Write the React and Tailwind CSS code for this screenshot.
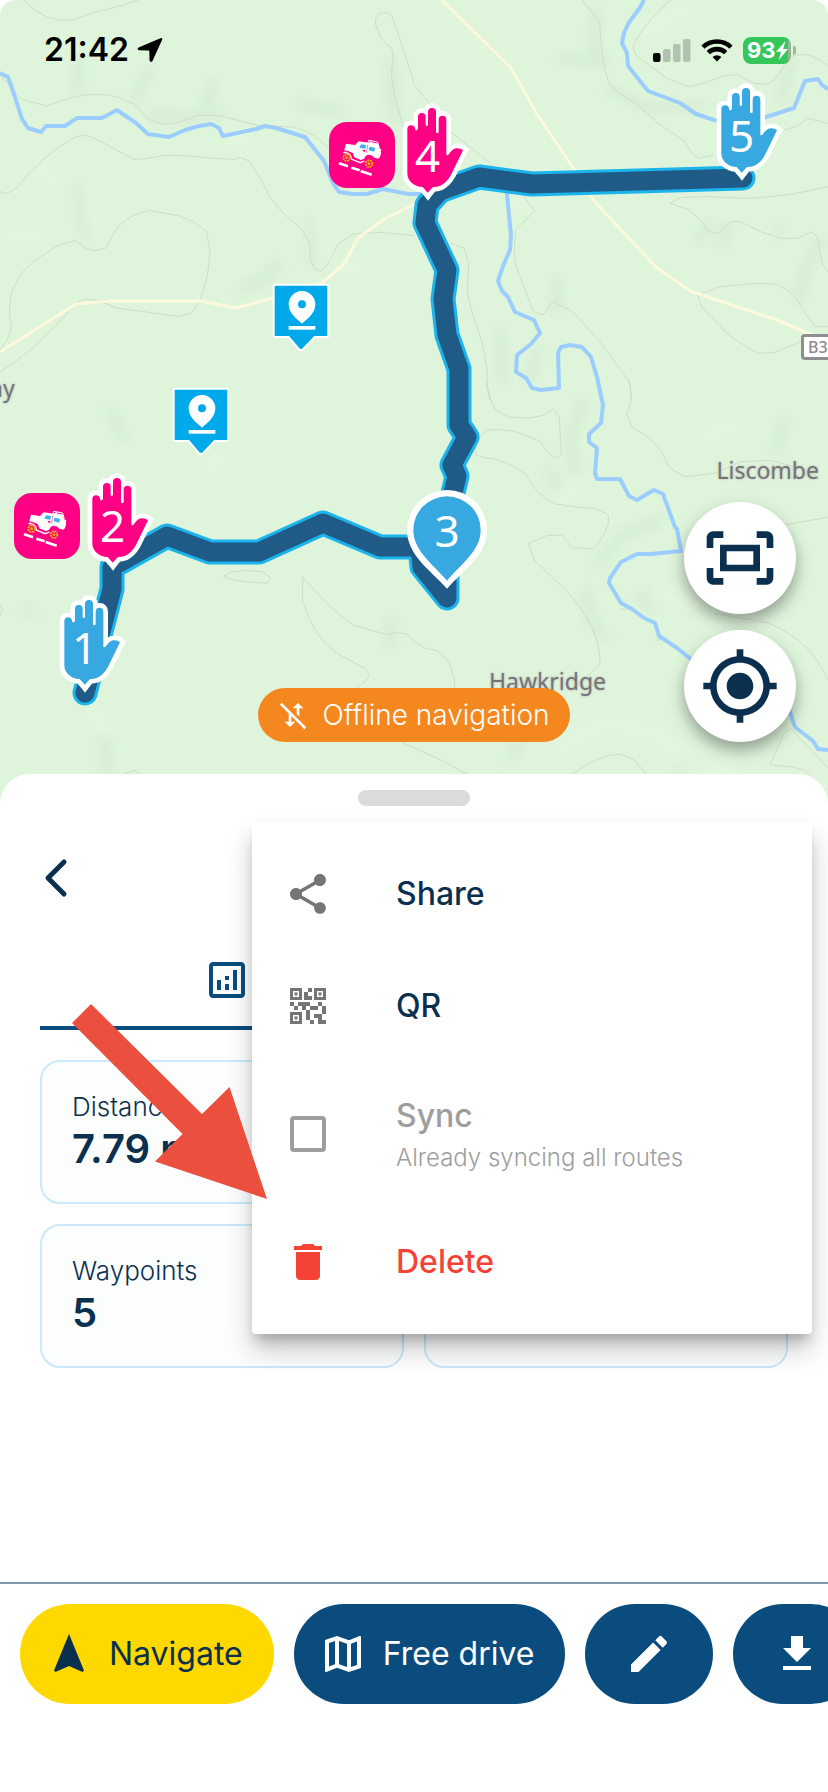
import React from "react";
import {
  MdShare,
  MdQrCode2,
  MdDelete,
  MdEdit,
  MdFileDownload,
  MdOutlineMap,
  MdNavigation,
  MdOutlineAnalytics,
  MdOutlineFitScreen,
  MdGpsFixed,
  MdMobiledataOff,
} from "react-icons/md";

const ROUTE =
  "M85 693L112 589L112 567L167 536L210 552L259 552L323 523L380 547L420 547L422 567L447 598L447 530L453 493L457 476L452 465L467 437L459 425L459 369L447 335L443 299L447 270L425 223L427 205L440 191L479 177L532 184L743 178";

function Terrain() {
  return (
    <svg
      className="absolute inset-0 h-full w-full"
      viewBox="0 0 828 804"
      preserveAspectRatio="xMidYMin slice"
      aria-hidden="true"
    >
      <defs>
        <filter id="soft" x="-50%" y="-50%" width="200%" height="200%">
          <feGaussianBlur stdDeviation="6" />
        </filter>
      </defs>
      <rect width="828" height="804" fill="#def5db" />

      <g filter="url(#soft)" fill="none" strokeLinecap="round" strokeLinejoin="round">
        <g stroke="#a9caa8" strokeOpacity="0.2" strokeWidth="9">
          <path d="M80 60L78 92M150 72L134 98M212 84L206 104" />
          <path d="M82 185L80 222L90 236" />
          <path d="M150 114L190 118L220 112M300 104L340 112" />
          <path d="M240 290L262 280L278 262M312 220L314 262" />
          <path d="M392 60L392 110L400 122" />
          <path d="M596 10L592 50L606 62M560 58L600 62" />
          <path d="M610 90L650 108L700 106" />
          <path d="M708 224L700 240M728 226L722 246M780 224L782 250" />
          <path d="M820 240L806 270L798 300" />
          <path d="M558 280L556 310M500 330L502 380M538 350L530 378" />
          <path d="M584 400L570 440L576 474M548 470L560 488" />
          <path d="M660 520L620 536L598 566" />
          <path d="M586 590L590 620L606 636M640 592L650 610" />
          <path d="M784 420L776 450M790 60L782 100" />
          <path d="M104 738L108 774M510 760L520 740M680 770L690 760" />
          <path d="M110 410L124 438M24 608L36 622M390 620L392 648" />
        </g>
        <g stroke="#edfbe8" strokeOpacity="0.5" strokeWidth="9">
          <path d="M90 180L94 230M10 235L40 237M40 160L50 180" />
          <path d="M322 215L324 256M344 270L360 262M230 142L246 138" />
          <path d="M510 210L540 196M646 30L690 6M786 235L784 262" />
          <path d="M560 500L580 484M700 440L736 424M660 590L690 604" />
          <path d="M560 750L600 724L650 730L690 764M706 776L730 770" />
          <path d="M206 470L222 458M26 620L34 626M92 710L106 730" />
        </g>
      </g>

      <g fill="none" stroke="#d0dcc6" strokeWidth="3">
        <g transform="scale(0.33333)">
          <path d="M70 0Q140 70 210 61Q250 50 270 40Q360 20 415 0" />
          <path d="M0 225L66 298L140 318L225 290Q300 275 355 292L402 312L446 358L492 374Q540 370 590 347L660 347L770 375L885 382Q950 400 990 450" />
          <path d="M0 575L22 580L52 562Q120 470 228 410L254 406Q280 410 330 440L402 478L440 476L490 466L560 467L640 475L700 478L724 473L748 484Q780 530 812 595L850 640L904 686L931 732L931 778L943 806L962 814L985 790L1015 732L1060 702L1140 697L1242 707" />
          <path d="M0 1050L22 1020L35 978Q20 930 38 870L60 824L105 780L178 734L228 722L255 744L288 752L318 744L332 718Q350 670 402 646L446 631L534 647L580 665L620 695L630 756Q625 830 612 860L598 908L572 940L534 949L446 937L350 924L288 900L254 898L230 908L168 976Q90 1060 0 1116" />
          <path d="M1242 250Q1200 110 1176 50Q1150 20 1127 55L1127 75Q1140 120 1175 145L1180 170L1174 222L1184 290L1215 400L1242 460" />
        </g>
        <g transform="translate(414 0) scale(0.33333)">
          <path d="M0 255L48 312M105 392Q180 450 230 490L325 585L362 632L305 690Q295 780 312 815L358 934L387 945L416 905L474 934Q560 1020 620 1110L648 1150L652 1200" />
          <path d="M505 0L557 65Q560 180 586 253L630 290L668 312L735 372L810 422L834 460L855 475L900 465M1110 390L1150 378L1180 355L1242 370" />
          <path d="M770 0Q700 60 660 130Q650 160 690 185L760 236L827 260L870 250L926 228L968 224L1020 250L1060 252Q1090 240 1120 180Q1170 140 1242 198" />
          <path d="M1242 560Q1120 590 1000 595L880 590L800 592L768 610L825 630L860 660L884 695L914 700L945 668L975 663L1040 695L1100 715L1150 715L1195 695L1210 712L1225 790L1242 815" />
          <path d="M1242 980L1205 980L1180 950L1150 900L1118 868L1088 853L1030 850L920 860L850 885L866 925L950 1010L1030 1060L1080 1058L1160 1025" />
          <path d="M110 730L150 745L164 790L160 880L175 940L205 1030L220 1110L218 1160L228 1200" />
        </g>
        <g transform="translate(0 380) scale(0.33333)">
          <path d="M670 590L690 577L740 571L785 575L812 593L802 610L740 606L700 600Z" />
          <path d="M908 590L908 665Q940 770 1010 820L1095 865L1108 885L1095 905L1070 923M908 590Q980 680 1060 735L1160 764L1190 757L1220 762L1242 784" />
          <path d="M370 1183L402 1171L422 1183M0 675L8 690L0 708M1205 1087L1242 1103" />
        </g>
        <g transform="translate(414 380) scale(0.33333)">
          <path d="M218 0Q225 60 245 90L285 112L345 114L388 106L418 88L436 112L442 225L430 234Q400 225 380 185Q290 140 220 150L185 185L185 225L210 233Q270 235 332 280Q370 350 425 372L505 383L540 385L583 404L583 434Q560 490 535 507L475 503L445 466L400 466L343 490L360 540L450 625Q560 740 558 850L520 890" />
          <path d="M645 0L653 58L638 105L655 142L705 172L740 210L768 265L812 290L900 280L980 245L1070 241L1180 270L1215 300M1242 412L1115 434M900 700L1060 728Q1190 780 1242 900" />
          <path d="M0 784L35 805L70 812L105 845L122 900L122 925M475 1183Q560 1120 620 1123L660 1140L698 1183M0 1103L80 1140L160 1183" />
          <path d="M1242 1164L1130 1045L1110 1060L1068 1155L1130 1160L1170 1170L1190 1183M620 687L652 687M722 780L740 780" />
        </g>
      </g>

      <g fill="none" stroke="#fdf9dc" strokeWidth="3" strokeLinejoin="round">
        <path d="M0 352L76 304L110 301L200 301L236 308L274 298L322 283L344 264L358 238L386 218L420 202" />
        <path d="M442 0L511 68L537 114L576 172L594 201L656 267L690 291L777 320L828 342" />
      </g>

      <g fill="none" stroke="#9bcdff" strokeWidth="4" strokeLinejoin="round">
        <path d="M0 73L8 77L15 97L22 119L28 128L41 132L46 126L65 126L77 118L102 118L117 110L136 123L148 134L169 137L185 130L199 126L211 124L219 128L223 136L256 129L265 126L276 128L305 137L324 161L333 183L339 192L352 194L367 194L383 189L408 194L424 194" />
        <path d="M644 0L641 6L628 24L624 33L622 43L627 53L628 66L648 91L680 103L696 114L714 120L742 124L766 117L794 108L805 81L818 79L822 85L828 89" />
        <path d="M506 184L511 235L510 250L503 266L498 281L502 291L508 297L515 312L534 320L540 333L531 344L517 355L516 372L526 378L532 388L541 390L559 388L558 353L561 347L570 345L582 347L591 357L597 377L603 405L601 423L589 434L589 442L597 448L595 473L597 479L620 479L629 496L637 500L654 490L663 494L675 527L677 529L681 551L651 554L637 554L621 562L610 578L609 583L621 603L632 609L644 618L655 623L659 636L677 648L692 660L740 680L790 712L795 727L813 741L818 749L828 750" />
      </g>

      <g fill="none" strokeLinejoin="round" strokeLinecap="round">
        <path d={ROUTE} stroke="#1cb4ec" strokeWidth="25" />
        <path d={ROUTE} stroke="#1f5b86" strokeWidth="19" />
      </g>
    </svg>
  );
}

const HAND =
  "M245 89Q245 77 256.500 77Q268 77 269 92Q277 93 277 84L277 51Q277 40 288.500 40Q300 40 300 51L300 76Q303 82 307 76L307 37Q307 25 319 25Q331 25 331 37L331 98Q335 104 339 98L339 60Q339 48 350.500 48Q362 48 362 60L362 165Q366 170 370 163Q380 148 392 146Q405 145 412 152L376 226Q362 250 344 258Q335 262 322 262L306 279L291 262Q270 262 256 248Q245 236 245 220Z";

function HandMarker({ place, fill, children }) {
  return (
    <div className={`absolute h-[98px] w-[68px] ${place}`}>
      <svg className="absolute inset-0 h-full w-full" viewBox="229 10 204 294" aria-hidden="true">
        <path d={HAND} fill="#fff" stroke="#fff" strokeWidth="28" strokeLinejoin="round" />
        <path d="M276 262L307 303L338 262ZM392 132L431 149L405 190Z" fill="#fff" />
        <path d={HAND} fill={fill} />
      </svg>
      <span className="absolute left-0 top-[22px] w-[51px] text-center font-['Noto_Sans',sans-serif] text-[44px] leading-[60px] text-white">
        {children}
      </span>
    </div>
  );
}

function PoiMarker({ place }) {
  return (
    <svg className={`absolute h-[69px] w-[58px] ${place}`} viewBox="0 0 174 207" aria-hidden="true">
      <path
        d="M10 5H164Q169 5 169 10V157Q169 162 164 162H128L94 198Q87 205 80 198L50 162H10Q5 162 5 157V10Q5 5 10 5Z"
        fill="#00aaea"
        stroke="#fff"
        strokeWidth="6"
      />
      <path
        fillRule="evenodd"
        d="M90 24A40 40 0 0 1 130 64C130 90 108 106 90 122C72 106 50 90 50 64A40 40 0 0 1 90 24ZM90 52A12 12 0 1 0 90 76A12 12 0 1 0 90 52Z"
        fill="#fff"
      />
      <rect x="50" y="129" width="80" height="11" fill="#fff" />
    </svg>
  );
}

function JeepBadge({ place }) {
  return (
    <div className={`absolute size-[66px] rounded-[18px] bg-[#ff0084] ${place}`}>
      <svg className="h-full w-full" viewBox="0 0 198 198" aria-hidden="true">
        <path
          d="M51 65L78 69L89 58L148 66L152 76L149 110L136 107Q130 98 118 98Q108 100 105 112L96 115L76 106L72 94Q64 88 54 89L45 88Z"
          fill="#fff"
        />
        <path d="M44 86Q62 86 68 97L72 108L94 116L106 112" fill="none" stroke="#ff0084" strokeWidth="3" />
        <path d="M43 92Q58 90 64 100L68 112L94 122L106 117" fill="none" stroke="#fff" strokeWidth="4" />
        <path d="M96 67L111 69L109 80L91 77ZM121 74L138 77L136 89L119 85Z" fill="#35b5ea" />
        <path d="M101 85L109 84L107 90ZM116 69L113 92" fill="#ff0084" stroke="#ff0084" strokeWidth="1.500" />
        <path d="M117 62L119 55L146 60L148 68M126 56L128 63M120 61L146 66" fill="none" stroke="#fff" strokeWidth="3" />
        <path d="M151 80L157 81L155 91L157 92L152 107L145 105Z" fill="#fff" />
        <circle cx="53" cy="107" r="10" fill="#ff0084" stroke="#f2b900" strokeWidth="5" strokeDasharray="6 2" />
        <circle cx="53" cy="107" r="4" fill="#f2b900" />
        <circle cx="120" cy="125" r="10" fill="#ff0084" stroke="#f2b900" strokeWidth="5" strokeDasharray="6 2" />
        <circle cx="120" cy="125" r="4" fill="#f2b900" />
        <path d="M30 124L57 133M67 137L92 145M95 147L128 158" stroke="#fff" strokeWidth="8" />
      </svg>
    </div>
  );
}

function StatusBar() {
  return (
    <header className="absolute inset-x-0 top-0 flex h-[100px] items-center justify-between pl-11 pr-8">
      <div className="flex items-center gap-2">
        <time className="text-[32px] font-semibold leading-10 text-black">21:42</time>
        <svg className="size-[26px]" viewBox="0 0 26 26" aria-hidden="true">
          <path d="M24 1Q26 1 25 3L15.500 24Q13.500 26 12.500 23.500L12.300 14.300Q12.200 13.500 11.500 13.500L2 13.300Q-.5 12.500 1.500 10.500Z" fill="#000" />
        </svg>
      </div>
      <div className="flex items-center gap-[10px]">
        <svg className="h-6 w-[38px]" viewBox="0 0 38 24" aria-hidden="true">
          <rect x="0" y="15" width="7.500" height="9" rx="2" fill="#000" />
          <rect x="10" y="11" width="7.500" height="13" rx="2" fill="#b0c3ae" />
          <rect x="20" y="6" width="7.500" height="18" rx="2" fill="#b0c3ae" />
          <rect x="30" y="1" width="7.500" height="23" rx="2" fill="#b0c3ae" />
        </svg>
        <svg className="h-6 w-8" viewBox="0 0 32 24" aria-hidden="true">
          <g fill="none" stroke="#000" strokeWidth="4.600">
            <path d="M2 9.200A20 20 0 0 1 30 9.200" />
            <path d="M7.300 14.600A12.500 12.500 0 0 1 24.700 14.600" />
          </g>
          <path d="M11.500 19Q16 15.500 20.500 19L16 23.500Z" fill="#000" />
        </svg>
        <div className="flex items-center gap-0.5">
          <div className="flex h-[27px] w-12 items-center overflow-hidden rounded-[8px] bg-[linear-gradient(to_right,#35c759_94%,#93b593_94%)] pl-1">
            <span className="text-[22px] font-bold leading-6 text-white">93</span>
            <svg className="h-[19px] w-3" viewBox="0 0 12 19" aria-hidden="true">
              <path d="M9.500 0L0 10.800H5L2.800 19L12 8H7.200Z" fill="#fff" />
            </svg>
          </div>
          <span className="h-[9px] w-[3px] rounded-r-full bg-[#a3b5a2]" />
        </div>
      </div>
    </header>
  );
}

function MapLabel({ place, children }) {
  return (
    <span
      className={`absolute font-['Noto_Sans',sans-serif] text-[23px] leading-8 text-[#757575] [text-shadow:0_0_2px_#bdbdbd,0_0_3px_#cfcfcf] ${place}`}
    >
      {children}
    </span>
  );
}

function MapButton({ label, children }) {
  return (
    <button
      type="button"
      aria-label={label}
      className="flex size-28 items-center justify-center rounded-full bg-white text-[#0b304f] shadow-[0_8px_16px_rgba(0,0,0,0.35)]"
    >
      {children}
    </button>
  );
}

function RouteMap() {
  return (
    <section className="relative h-[804px] shrink-0 overflow-hidden rounded-t-2xl">
      <Terrain />
      <MapLabel place="right-[9px] top-[454px]">Liscombe</MapLabel>
      <MapLabel place="left-[489px] top-[665px]">Hawkridge</MapLabel>
      <MapLabel place="-left-[10px] top-[372px]">ay</MapLabel>
      <span className="absolute -right-[25px] top-[334px] flex h-[26px] items-center rounded-[4px] border-[3px] border-[#8e8e92] bg-white px-1 font-['Noto_Sans',sans-serif] text-base font-medium text-[#8a8a8a]">
        B322
      </span>

      <PoiMarker place="left-[272px] top-[283px]" />
      <PoiMarker place="left-[172px] top-[387px]" />
      <JeepBadge place="left-[329px] top-[122px]" />
      <JeepBadge place="left-[14px] top-[493px]" />

      <HandMarker place="left-[716px] top-[83px]" fill="#38a8e0">5</HandMarker>
      <HandMarker place="left-[402px] top-[103px]" fill="#ff0084">4</HandMarker>
      <HandMarker place="left-[87px] top-[473px]" fill="#ff0084">2</HandMarker>
      <HandMarker place="left-[59px] top-[595px]" fill="#38a8e0">1</HandMarker>
      <div className="absolute left-[407px] top-[490px] h-[100px] w-20">
        <svg className="absolute inset-0 h-full w-full" viewBox="0 0 240 300" aria-hidden="true">
          <path d="M120 0A120 120 0 0 1 240 120C240 195 170 240 120 296C70 240 0 195 0 120A120 120 0 0 1 120 0Z" fill="#fff" />
          <path d="M120 19A101 101 0 0 1 221 120C221 182 163 222 120 272C77 222 19 182 19 120A101 101 0 0 1 120 19Z" fill="#38a8e0" />
        </svg>
        <span className="absolute inset-x-0 top-[10px] text-center font-['Noto_Sans',sans-serif] text-[44px] leading-[60px] text-white">
          3
        </span>
      </div>

      <StatusBar />

      <div className="absolute right-8 top-[502px] flex flex-col gap-4">
        <MapButton label="Fit route to screen">
          <MdOutlineFitScreen className="size-20" />
        </MapButton>
        <MapButton label="Centre on my location">
          <MdGpsFixed className="size-20" />
        </MapButton>
      </div>

      <div className="absolute inset-x-0 top-[688px] flex justify-center">
        <div className="flex h-[54px] items-center gap-3 rounded-full bg-[#f5871f] px-5 text-white">
          <MdMobiledataOff className="size-8" />
          <span className="text-[28px] font-light leading-8">Offline navigation</span>
        </div>
      </div>
    </section>
  );
}

function StatCard({ label, value }) {
  return (
    <div className="h-36 rounded-[20px] border-2 border-[#c9eafc] bg-[#fcfefe] px-[30px] pt-[27px] text-[#0b304f]">
      {label && (
        <>
          <p className="text-[26px] font-light leading-9">{label}</p>
          <p className="text-[40px] font-semibold leading-[48px]">{value}</p>
        </>
      )}
    </div>
  );
}

function MenuItem({ icon, className, children }) {
  return (
    <button
      type="button"
      role="menuitem"
      className={`flex h-28 w-full items-center gap-16 px-8 text-left text-[32px] font-medium leading-10 ${className}`}
    >
      {icon}
      <span>{children}</span>
    </button>
  );
}

function RouteMenu() {
  return (
    <div
      role="menu"
      className="absolute right-4 top-12 w-[560px] rounded-[4px] bg-white py-4 shadow-[0_10px_12px_-4px_rgba(0,0,0,0.22),0_16px_28px_rgba(0,0,0,0.2)]"
    >
      <MenuItem icon={<MdShare className="size-12 text-[#757575]" />} className="text-[#0b304f]">
        Share
      </MenuItem>
      <MenuItem icon={<MdQrCode2 className="size-12 text-[#757575]" />} className="text-[#0b304f]">
        QR
      </MenuItem>
      <label className="flex h-36 items-center gap-16 px-8 text-[#9e9e9e]">
        <input
          type="checkbox"
          disabled
          className="m-1.5 size-9 shrink-0 appearance-none rounded-[4px] border-4 border-[#9e9e9e]"
        />
        <span className="flex flex-col gap-1 pt-1">
          <span className="text-[32px] font-medium leading-10">Sync</span>
          <span className="text-2xl font-light leading-9">Already syncing all routes</span>
        </span>
      </label>
      <MenuItem icon={<MdDelete className="size-12" />} className="text-[#f44336]">
        Delete
      </MenuItem>
    </div>
  );
}

function ActionButton({ icon, label, className, children }) {
  return (
    <button
      type="button"
      aria-label={label}
      className={`flex h-[100px] shrink-0 items-center gap-4 rounded-full text-[32px] leading-10 ${className}`}
    >
      {icon}
      {children && <span>{children}</span>}
    </button>
  );
}

export default function App() {
  return (
    <main className="flex min-h-screen flex-col overflow-x-hidden bg-white font-[Inter,sans-serif]">
      <RouteMap />

      <section className="relative -mt-[30px] flex flex-1 flex-col rounded-t-[30px] bg-white pt-4">
        <div className="mx-auto h-4 w-28 rounded-full bg-[#dadbdd]" />

        <div className="flex h-36 items-center px-8">
          <button type="button" aria-label="Back" className="flex size-12 items-center justify-center text-[#0b304f]">
            <svg className="size-12" viewBox="0 0 48 48" fill="none" stroke="currentColor" strokeWidth="5" strokeLinecap="round" strokeLinejoin="round" aria-hidden="true">
              <path d="M32 8L16 24L32 40" />
            </svg>
          </button>
        </div>

        <div role="tablist" className="flex px-10">
          <button
            type="button"
            role="tab"
            aria-selected="true"
            aria-label="Statistics"
            className="flex w-1/2 justify-center border-b-4 border-[#0a4c7d] pb-[22px] pt-1.5 text-[#0a4c7d]"
          >
            <MdOutlineAnalytics className="size-12" />
          </button>
        </div>

        <div className="mt-[30px] grid grid-cols-2 gap-5 px-10">
          <StatCard label="Distance" value="7.79 mi" />
          <StatCard />
          <StatCard label="Waypoints" value="5" />
          <StatCard />
        </div>

        <RouteMenu />

        <svg className="pointer-events-none absolute left-[72px] top-[230px] h-[196px] w-[196px]" viewBox="72 1004 196 196" aria-hidden="true">
          <path d="M91 1004L72 1023L182.500 1134L155 1161.500L267 1199L229.500 1087L202 1114Z" fill="#eb503e" />
        </svg>
      </section>

      <nav aria-label="Route actions" className="flex gap-5 overflow-hidden border-t-2 border-[#7f97ab] bg-white pb-[88px] pl-5 pt-5">
        <ActionButton icon={<MdNavigation className="size-12" />} className="bg-[#ffd800] pl-[25px] pr-[31px] text-[#0b304f]">
          Navigate
        </ActionButton>
        <ActionButton icon={<MdOutlineMap className="size-12" />} className="bg-[#0a4c7d] pl-[25px] pr-[31px] text-white">
          Free drive
        </ActionButton>
        <ActionButton icon={<MdEdit className="size-12" />} label="Edit" className="bg-[#0a4c7d] px-10 text-white" />
        <ActionButton icon={<MdFileDownload className="size-12" />} label="Download" className="bg-[#0a4c7d] px-10 text-white" />
      </nav>
    </main>
  );
}
